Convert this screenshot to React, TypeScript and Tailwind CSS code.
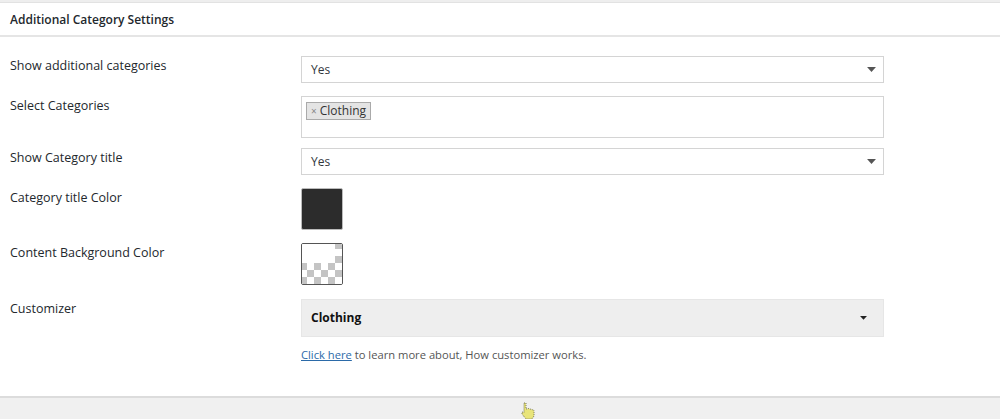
import React from "react";

function Arrow({ color = "#555", w = 9 }: { color?: string; w?: number }) {
  return (
    <svg width={w} height={w * 0.55} viewBox="0 0 9 5" className="shrink-0">
      <path d="M0 0 L9 0 L4.5 5 Z" fill={color} />
    </svg>
  );
}

function Checker() {
  const cells: React.ReactNode[] = [];
  const s = 7;
  for (let r = 0; r < 6; r++) {
    for (let c = 0; c < 6; c++) {
      const visible = r >= 3 || c >= 5 || (r === 2 && c >= 4);
      if (visible && (r + c) % 2 === 1) {
        cells.push(<rect key={`${r}-${c}`} x={c * s - 2} y={r * s - 2} width={s} height={s} fill="#c4c4c4" />);
      }
    }
  }
  return (
    <svg width="40" height="40" viewBox="0 0 40 40" className="block">
      <rect x="0" y="0" width="40" height="40" fill="#fff" />
      {cells}
    </svg>
  );
}

function Label({ children }: { children: React.ReactNode }) {
  return <div className="w-[291px] shrink-0 pt-[2px] text-[12.5px] leading-[16px] text-[#23282d]">{children}</div>;
}

function Select({ value }: { value: string }) {
  return (
    <div className="flex h-[27px] w-[583px] items-center justify-between border border-[#d4d4d4] bg-white pl-[9px] pr-[7px] text-[12px] text-[#32373c]">
      <span>{value}</span>
      <Arrow />
    </div>
  );
}

export default function App() {
  return (
    <div
      className="relative h-[419px] w-[1000px] overflow-hidden bg-white text-[#23282d]"
      style={{ fontFamily: '"Open Sans", "Noto Sans", sans-serif' }}
    >
      <div className="h-[3px] bg-[#eeeeee] border-b border-[#e2e2e2]" />
      <div className="flex h-[34px] items-center border-b-2 border-[#e5e5e5] px-[10px] pt-[1px] text-[12px] font-semibold text-[#23282d]">
        Additional Category Settings
      </div>

      <div className="px-[10px] pt-[19px]">
        <div className="flex">
          <Label>Show additional categories</Label>
          <Select value="Yes" />
        </div>

        <div className="mt-[13px] flex">
          <Label>Select Categories</Label>
          <div className="flex h-[42px] w-[583px] items-start border border-[#d4d4d4] bg-white pl-[4px] pt-[5px]">
            <div className="flex h-[18px] items-center border border-[#aaaaaa] bg-[#e4e4e4] px-[4px] text-[12px] leading-[16px] text-[#333]">
              <span className="mr-[3px] text-[10px] text-[#888]">×</span>Clothing
            </div>
          </div>
        </div>

        <div className="mt-[10px] flex">
          <Label>Show Category title</Label>
          <Select value="Yes" />
        </div>

        <div className="mt-[13px] flex">
          <Label>Category title Color</Label>
          <div className="h-[42px] w-[42px] rounded-[2px] border border-[#bbbbbb] bg-[#2c2c2c]" />
        </div>

        <div className="mt-[13px] flex">
          <Label>Content Background Color</Label>
          <div className="h-[42px] w-[42px] overflow-hidden rounded-[2px] border border-[#555]">
            <Checker />
          </div>
        </div>

        <div className="mt-[14px] flex">
          <Label>Customizer</Label>
          <div className="w-[583px]">
            <div className="flex h-[38px] items-center justify-between border border-[#e6e6e6] bg-[#eeeeee] pl-[9px] pr-[16px] text-[12px] font-bold text-[#111]">
              <span>Clothing</span>
              <Arrow color="#222" w={7} />
            </div>
            <div className="mt-[10px] text-[11.2px] leading-[16px] text-[#555]">
              <span className="text-[#2b6aa8] underline">Click here</span> to learn more about, How customizer works.
            </div>
          </div>
        </div>
      </div>

      <div className="absolute bottom-0 left-0 right-0 h-[23px] border-t-2 border-[#dcdcdc] bg-[#f0f0f0]" />

      <svg className="absolute left-[520px] top-[402px]" width="18" height="18" viewBox="0 0 18 18">
        <path
          d="M4 1 L6 1 L6 7 L8 6.5 L10 7 L12 7.5 L14 8.5 L14 14 L12 17 L6 17 L2 12 L2 10 L4 10.5 Z"
          fill="#e8e47a"
          stroke="#7a7a5a"
          strokeWidth="1"
          strokeDasharray="1 1"
        />
      </svg>
    </div>
  );
}
